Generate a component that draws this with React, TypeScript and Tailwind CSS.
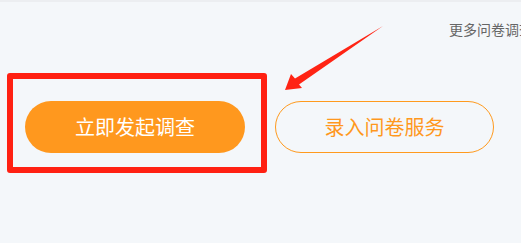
import React from 'react';

const FONT = { fontFamily: '"Noto Sans CJK SC", "Noto Sans", sans-serif' };

function Arrow() {
  return (
    <svg
      className="pointer-events-none absolute left-0 top-0"
      width="521"
      height="243"
      viewBox="0 0 521 243"
    >
      <polygon
        points="285,88 291,72 295,76.5 383,24 299,82.5 302,86"
        fill="#ff2414"
      />
    </svg>
  );
}

export default function App() {
  return (
    <div
      className="relative h-[243px] w-[521px] overflow-hidden border-t-2 border-[#eceef1] bg-[#f4f7fa]"
      style={FONT}
    >
      <div className="flex justify-end pt-[17px]">
        <div className="w-[72px] overflow-hidden whitespace-nowrap text-[14px] leading-[20px] text-[#666]">
          更多问卷调查
        </div>
      </div>

      <div className="mt-[34px] flex items-start pl-[7px]">
        <div className="h-[100px] w-[260px] rounded-[3px] border-[6px] border-[#ff2012] pl-[12px] pt-[22px]">
          <button className="flex h-[52px] w-[220px] items-center justify-center rounded-full bg-[#ff981e] text-[20px] text-white">
            立即发起调查
          </button>
        </div>
        <button className="ml-[8px] mt-[28px] flex h-[52px] w-[219px] items-center justify-center rounded-full border border-[#ff9a1e] text-[20px] text-[#ff981e]">
          录入问卷服务
        </button>
      </div>

      <Arrow />
    </div>
  );
}
